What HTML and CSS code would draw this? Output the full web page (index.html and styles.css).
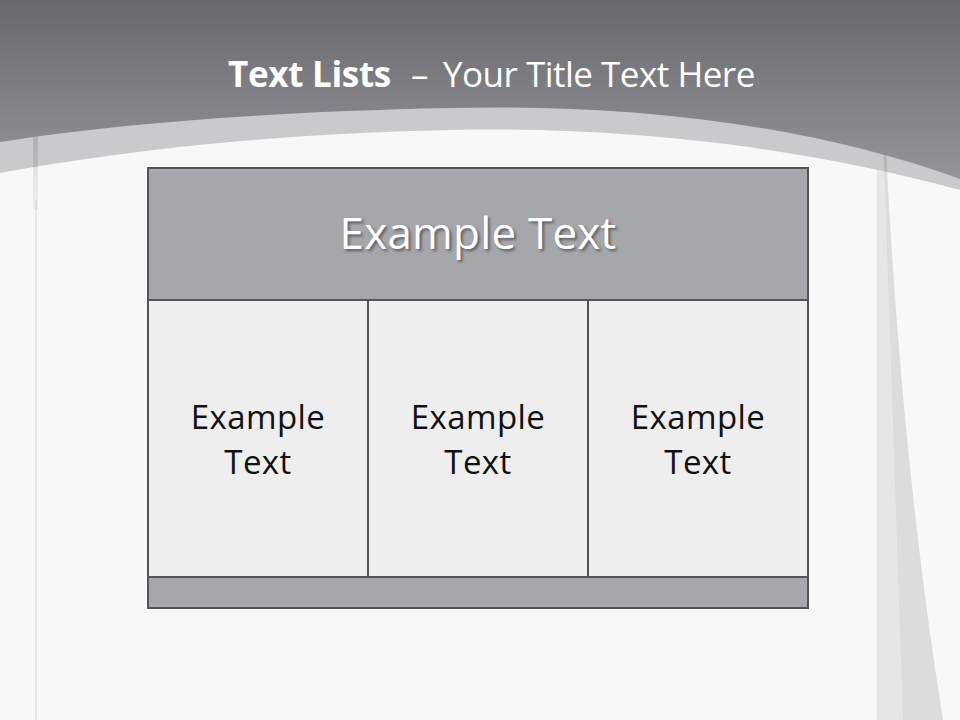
FILE: index.html
```html
<!DOCTYPE html>
<html lang="en">
<head>
<meta charset="utf-8">
<title>Text Lists</title>
<link rel="stylesheet" href="styles.css">
</head>
<body>
<div class="slide">
  <svg class="backdrop" width="960" height="720" viewBox="0 0 960 720" aria-hidden="true">
    <defs>
      <linearGradient id="top" x1="0" y1="0" x2="0" y2="1">
        <stop offset="0" stop-color="#68686d"/>
        <stop offset="1" stop-color="#94959a"/>
      </linearGradient>
      <linearGradient id="leftfade" x1="0" y1="0" x2="0" y2="1">
        <stop offset="0" stop-color="#000" stop-opacity="0.13"/>
        <stop offset="1" stop-color="#000" stop-opacity="0.04"/>
      </linearGradient>
    </defs>
    <path d="M0,0 H960 V190 C800,146 620,126 450,130 C250,134 100,155 0,173 Z" fill="#cacacc"/>
    <rect x="33" y="130" width="5" height="80" fill="url(#leftfade)"/>
    <rect x="35" y="200" width="2" height="520" fill="#000" fill-opacity="0.07"/>
    <path d="M877,130 L885,130 Q900,450 943,720 L877,720 Z" fill="#000" fill-opacity="0.11"/>
    <path d="M877,130 L883,130 L903,720 L877,720 Z" fill="#fff" fill-opacity="0.3"/>
    <path d="M0,0 H960 V179 C800,121 620,104 450,108 C250,112 100,126 0,142 Z" fill="url(#top)"/>
  </svg>

  <h1 class="title"><b class="title-main">Text Lists</b><span class="title-dash">–</span><span class="title-sub">Your Title Text Here</span></h1>

  <div class="table">
    <div class="table-head">Example Text</div>
    <div class="cell">Example<br>Text</div>
    <div class="cell">Example<br>Text</div>
    <div class="cell">Example<br>Text</div>
    <div class="table-foot"></div>
  </div>
</div>
</body>
</html>
```

FILE: styles.css
```css
html, body {
  margin: 0;
  padding: 0;
}

body {
  width: 960px;
  height: 720px;
  overflow: hidden;
  background: #f8f8f8;
  font-family: "Open Sans", Lato, sans-serif;
}

.slide {
  position: relative;
  width: 960px;
  height: 720px;
  display: flex;
  flex-direction: column;
}

.backdrop {
  position: absolute;
  left: 0;
  top: 0;
  z-index: 0;
}

.title {
  position: relative;
  z-index: 1;
  margin: 0;
  padding: 50px 0 0 228px;
  height: 118px;
  box-sizing: border-box;
  font-size: 35px;
  line-height: 48px;
  font-weight: 400;
  color: #ffffff;
  white-space: nowrap;
  letter-spacing: -0.5px;
}

.title-main {
  font-weight: 700;
  letter-spacing: -0.3px;
}

.title-dash {
  margin: 0 15px 0 20px;
}

.table {
  position: relative;
  z-index: 1;
  margin: 49px 0 0 147px;
  width: 662px;
  box-sizing: border-box;
  border: 2px solid #545458;
  background: #545458;
  display: grid;
  grid-template-columns: repeat(3, 1fr);
  grid-template-rows: 130px 275px 29px;
  gap: 2px;
}

.table-head {
  grid-column: 1 / -1;
  background: #a6a7ab;
  color: #ffffff;
  font-size: 44px;
  letter-spacing: 0.2px;
  display: flex;
  align-items: center;
  justify-content: center;
  padding-bottom: 4px;
  text-shadow: 2px 2px 3px rgba(0, 0, 0, 0.45);
}

.cell {
  background: #eeeeee;
  color: #111111;
  font-size: 33px;
  line-height: 45px;
  letter-spacing: 0.4px;
  display: flex;
  align-items: center;
  justify-content: center;
  text-align: center;
}

.table-foot {
  grid-column: 1 / -1;
  background: #a6a7ab;
}
```
